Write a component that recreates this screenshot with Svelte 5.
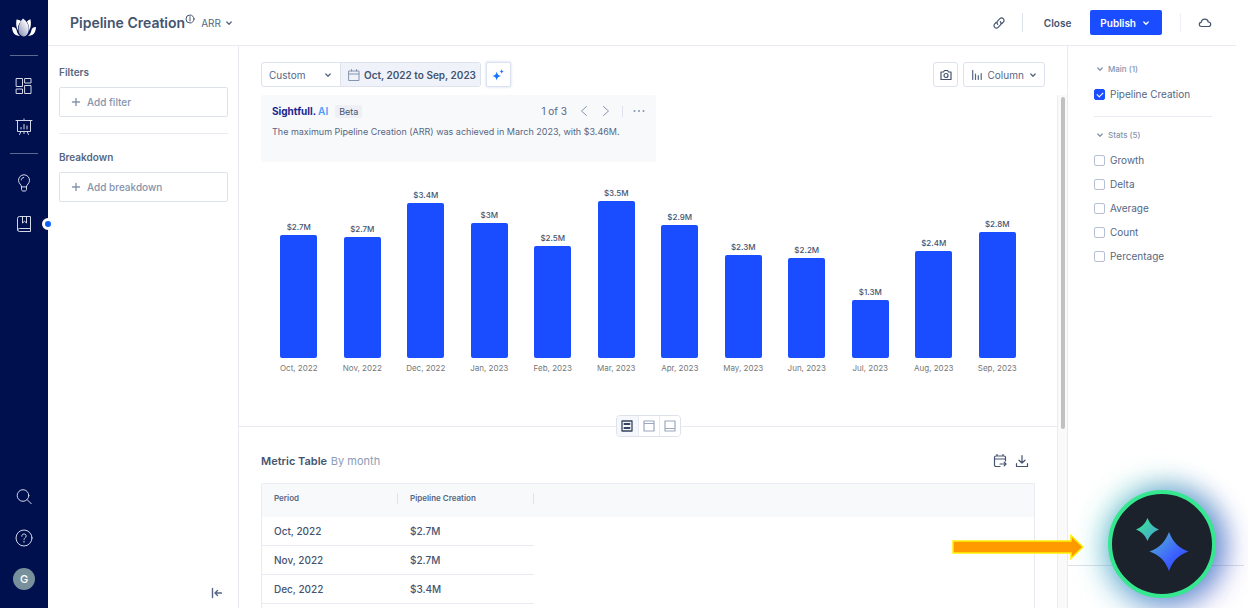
<script lang="ts">
    const months = [
        { label: 'Oct, 2022', value: 2.71 },
        { label: 'Nov, 2022', value: 2.66 },
        { label: 'Dec, 2022', value: 3.42 },
        { label: 'Jan, 2023', value: 2.98 },
        { label: 'Feb, 2023', value: 2.46 },
        { label: 'Mar, 2023', value: 3.46 },
        { label: 'Apr, 2023', value: 2.94 },
        { label: 'May, 2023', value: 2.27 },
        { label: 'Jun, 2023', value: 2.2 },
        { label: 'Jul, 2023', value: 1.28 },
        { label: 'Aug, 2023', value: 2.36 },
        { label: 'Sep, 2023', value: 2.78 },
    ];
    const PX_PER_M = 45.4;
    const VISIBLE_ROWS = 3;

    let metrics = $state([{ name: 'Pipeline Creation', on: true }]);
    let stats = $state([
        { name: 'Growth', on: false },
        { name: 'Delta', on: false },
        { name: 'Average', on: false },
        { name: 'Count', on: false },
        { name: 'Percentage', on: false },
    ]);
    let layout = $state('split');

    const money = (v: number) => `$${Number(v.toFixed(1))}M`;
</script>

{#snippet chevron()}
    <svg class="chevron" viewBox="0 0 8 8" width="8" height="8"><path d="M1.8 3 4 5.200l2.200-2.200" stroke-width="1.3" /></svg>
{/snippet}

{#snippet plus()}
    <svg viewBox="0 0 10 10" width="10" height="10"><path d="M5 1.500v7M1.500 5h7" stroke-width="1.4" /></svg>
{/snippet}

<div class="app">
    <nav class="rail">
        <a class="logo" href="#home" aria-label="Home">
            <svg viewBox="0 0 24 20" width="24" height="20">
                <defs>
                    <linearGradient id="petal" x1="0" y1="1" x2="0.8" y2="0">
                        <stop offset="0" stop-color="#8288ad" />
                        <stop offset="0.9" stop-color="#fff" />
                    </linearGradient>
                </defs>
                <path d="M0 9c3 0 4.300 1.500 4.800 4 .4 2 1.500 3.800 3.200 5C3 17.800.3 15 0 9z" fill="#fff" stroke="none" />
                <path d="M24 9c-3 0-4.300 1.500-4.800 4-.4 2-1.500 3.800-3.200 5 5-.2 7.700-3 8-9z" fill="#fff" stroke="none" />
                <path d="M4.500 1.500c2 .2 3.300.8 4.500 1.800C6.500 6 5.500 9 6 12.500 4.300 9.500 3.800 6 4.500 1.500z" fill="#fff" stroke="none" />
                <path d="M18.500 1.200c.8 4 .5 8-1.300 11.500C17.500 9 16.500 6 14.800 3.700c1-1.200 2-2 3.700-2.500z" fill="#fff" stroke="none" />
                <path d="M11 .5c4 3 6 6.500 5.800 10.500-.1 4-2 7-4.800 7.500C8.500 18.200 6.200 15.200 6.500 11 6.700 7 8 3.500 11 .5z" fill="url(#petal)" stroke="none" />
            </svg>
        </a>
        <hr />
        <a href="#dashboards" aria-label="Dashboards">
            <svg viewBox="0 0 18 18" width="18" height="18"><path d="M1.500 1.500h6v8h-6zM1.500 12h6v4.500h-6zM10 1.500h6V6h-6zM10 8.500h6v8h-6z" /></svg>
        </a>
        <a href="#boards" aria-label="Boards">
            <svg viewBox="0 0 18 18" width="18" height="18"><path d="M1 2.500h16M2.500 2.500v11h13v-11M9 1v1.500M6 13.500 4.500 16.500M12 13.500l1.500 3M9 13.500v2M6 9.500v1.500M9 6.500V11M12 8v3" /></svg>
        </a>
        <hr />
        <a href="#insights" aria-label="Insights">
            <svg viewBox="0 0 18 18" width="18" height="18"><path d="M6.500 12.500C6.500 10.500 3.500 9.800 3.500 6.300a5.500 5.500 0 0 1 11 0c0 3.500-3 4.200-3 6.200zM6.500 12.500v3c0 .8.5 1.500 1.500 1.500h2c1 0 1.500-.7 1.500-1.500v-3M6.200 6c.2-1.500 1-2.300 2.500-2.500" /></svg>
        </a>
        <a class="current" href="#catalog" aria-label="Catalog">
            <svg viewBox="0 0 18 18" width="18" height="18"><path d="M15.500 13.500V1.500H4.500a2 2 0 0 0-2 2v11a2 2 0 0 0 2 2h11v-3h-11a2 2 0 0 0-2 1.500M7.500 1.500V8l2-1.700 2 1.700V1.500" /></svg>
        </a>
        <div class="rail-end">
            <a href="#search" aria-label="Search">
                <svg viewBox="0 0 18 18" width="18" height="18"><circle cx="8" cy="7.500" r="5.800" /><path d="m12.300 11.800 4 4" /></svg>
            </a>
            <a href="#help" aria-label="Help">
                <svg viewBox="0 0 18 18" width="18" height="18"><circle cx="9" cy="9" r="8" /><path d="M6.800 7.200C6.800 5.800 7.700 5 9 5s2.200.8 2.200 2C11.200 8.600 9 8.700 9 10.400M9 12.200v1" /></svg>
            </a>
            <button class="avatar">G</button>
        </div>
    </nav>

    <div class="page">
        <header>
            <h1>Pipeline Creation</h1>
            <svg class="info" viewBox="0 0 10 10" width="10" height="10"><circle cx="5" cy="5" r="4" /><path d="M5 4.500v2.500M5 2.700v.8" /></svg>
            <div class="select unit">
                <select aria-label="Unit"><option>ARR</option></select>
                {@render chevron()}
            </div>
            <div class="actions">
                <button class="plain" aria-label="Copy link">
                    <svg viewBox="0 0 12 12" width="12" height="12"><path d="M4.700 7.300a2.400 2.400 0 0 1 0-3.400l2.200-2.200a2.400 2.400 0 0 1 3.400 3.400L8.900 6.500M7.300 4.700a2.400 2.400 0 0 1 0 3.400l-2.200 2.200a2.400 2.400 0 0 1-3.400-3.400l1.400-1.400" stroke-width="1.2" /></svg>
                </button>
                <span class="rule"></span>
                <button class="plain close">Close</button>
                <button class="publish">Publish {@render chevron()}</button>
                <span class="rule light"></span>
                <button class="plain" aria-label="Saved">
                    <svg viewBox="0 0 14 12" width="14" height="12"><path d="M3.500 9.500a2 2 0 0 1-.3-4.100C3.500 3.500 5 2.200 6.800 2.200c1.700 0 3.100 1.100 3.500 2.800 1.400.1 2.400 1 2.400 2.300 0 1.200-1 2.200-2.200 2.200z" stroke-width="1.2" /></svg>
                </button>
            </div>
        </header>

        <div class="body">
            <aside class="filters">
                <h2>Filters</h2>
                <button class="add">{@render plus()} Add filter</button>
                <hr />
                <h2>Breakdown</h2>
                <button class="add">{@render plus()} Add breakdown</button>
                <button class="plain collapse" aria-label="Collapse panel">
                    <svg viewBox="0 0 12 12" width="12" height="12"><path d="M1.500 1.500v9M10.500 6H4M6.500 3.500 4 6l2.500 2.500" stroke-width="1.4" /></svg>
                </button>
            </aside>

            <main>
                <div class="toolbar">
                    <div class="range">
                        <div class="select">
                            <select aria-label="Date range"><option>Custom</option></select>
                            {@render chevron()}
                        </div>
                        <button class="dates">
                            <svg viewBox="0 0 12 12" width="12" height="12"><path d="M1 2h10v9.500H1zM1 5h10M3.500.5V2M8.500.5V2" /></svg>
                            Oct, 2022 to Sep, 2023
                        </button>
                    </div>
                    <button class="spark" aria-label="AI insights">
                        <svg viewBox="0 0 12 12" width="12" height="12"><path d="M4.700 2.500c.7 3.100 1.400 3.800 4.500 4.500-3.100.7-3.800 1.400-4.500 4.500C4 8.400 3.300 7.700.2 7 3.300 6.300 4 5.600 4.700 2.500zM9.700.3c.4 1.500.7 1.800 2.200 2.200-1.500.4-1.800.7-2.200 2.200-.4-1.500-.7-1.800-2.200-2.200 1.500-.4 1.800-.7 2.200-2.200z" /></svg>
                    </button>
                    <button class="box camera" aria-label="Snapshot">
                        <svg viewBox="0 0 12 12" width="12" height="12"><path d="M1 3h2.500l1-1.500h3l1 1.500H11v7.500H1z" stroke-width="1.200" /><circle cx="6" cy="6.500" r="2" stroke-width="1.200" /></svg>
                    </button>
                    <div class="select box kind">
                        <svg viewBox="0 0 10 10" width="10" height="10"><path d="M.7.5v9M3.500 4v5.500M6.300 5.500v4M9.200 3.500v6" stroke-width="1.200" /></svg>
                        <select aria-label="Chart type"><option>Column</option></select>
                        {@render chevron()}
                    </div>
                </div>

                <div class="scroller">
                    <div class="content">
                        <section class="insight">
                            <div class="insight-head">
                                <h3>Sightfull.<span>AI</span></h3>
                                <span class="beta">Beta</span>
                                <span class="count">1 of 3</span>
                                <button class="plain" aria-label="Previous"><svg viewBox="0 0 10 10" width="10" height="10"><path d="M7.500.5 2.500 5l5 4.500" /></svg></button>
                                <button class="plain" aria-label="Next"><svg viewBox="0 0 10 10" width="10" height="10"><path d="M2.500.5l5 4.500-5 4.500" /></svg></button>
                                <span class="tick"></span>
                                <button class="plain more" aria-label="More"><svg class="dots" viewBox="0 0 12 4" width="12" height="4"><circle cx="1.500" cy="2" r="1" /><circle cx="6" cy="2" r="1" /><circle cx="10.500" cy="2" r="1" /></svg></button>
                            </div>
                            <p>The maximum Pipeline Creation (ARR) was achieved in March 2023, with $3.46M.</p>
                        </section>

                        <div class="chart">
                            {#each months as m}
                                <div class="col">
                                    <span class="value">{money(m.value)}</span>
                                    <div class="bar" style="height: {Math.round(m.value * PX_PER_M)}px"></div>
                                    <span class="month">{m.label}</span>
                                </div>
                            {/each}
                        </div>

                        <div class="divider">
                            <div class="views">
                                <button class:on={layout === 'split'} onclick={() => layout = 'split'} aria-label="Chart and table">
                                    <svg viewBox="0 0 12 12" width="12" height="12"><path d="M1 1h10v10H1z" stroke-width="1.300" /><path d="M3.500 4h5M3.500 8h5" stroke-width="2" /></svg>
                                </button>
                                <button class:on={layout === 'chart'} onclick={() => layout = 'chart'} aria-label="Chart only">
                                    <svg viewBox="0 0 12 12" width="12" height="12"><path d="M1 1h10v10H1zM1 3.500h10" stroke-width="1.2" /></svg>
                                </button>
                                <button class:on={layout === 'table'} onclick={() => layout = 'table'} aria-label="Table only">
                                    <svg viewBox="0 0 12 12" width="12" height="12"><path d="M1 1h10v10H1zM1 8.500h10" stroke-width="1.2" /></svg>
                                </button>
                            </div>
                        </div>

                        <div class="table-head">
                            <h2>Metric Table <span>By month</span></h2>
                            <button class="plain" aria-label="Schedule">
                                <svg viewBox="0 0 14 14" width="14" height="14"><path d="M7 12.500H3a1.500 1.500 0 0 1-1.500-1.500V3.500A1.500 1.500 0 0 1 3 2h8a1.500 1.500 0 0 1 1.500 1.500V7M1.500 5h11M4 .5V2M10 .5V2M7 10h6M11.200 8.200 13 10l-1.800 1.800" stroke-width="1.200" /></svg>
                            </button>
                            <button class="plain" aria-label="Download">
                                <svg viewBox="0 0 14 14" width="14" height="14"><path d="M7 1.500V9M4 6.200 7 9l3-2.800M1.500 9.500v3h11v-3" stroke-width="1.200" /></svg>
                            </button>
                        </div>

                        <div class="table-box">
                            <table>
                                <thead>
                                    <tr><th><span>Period</span></th><th><span>Pipeline Creation</span></th><th></th></tr>
                                </thead>
                                <tbody>
                                    {#each months.slice(0, VISIBLE_ROWS) as m}
                                        <tr><td>{m.label}</td><td>{money(m.value)}</td></tr>
                                    {/each}
                                </tbody>
                            </table>
                        </div>
                    </div>
                    <div class="track"><div class="thumb"></div></div>
                </div>
            </main>

            <aside class="series">
                <div class="series-list">
                    <h4>{@render chevron()} Main (1)</h4>
                    {#each metrics as item}
                        <label><input type="checkbox" bind:checked={item.on} />{item.name}</label>
                    {/each}
                    <hr />
                    <h4>{@render chevron()} Stats (5)</h4>
                    {#each stats as item}
                        <label><input type="checkbox" bind:checked={item.on} />{item.name}</label>
                    {/each}
                </div>
                <div class="series-foot"></div>
            </aside>
        </div>
    </div>

    <svg class="arrow" viewBox="0 0 132 26" width="132" height="26">
        <path d="M1 7h118V1.500L131 13l-12 11.500V19H1z" />
    </svg>
    <button class="assistant" aria-label="Open assistant">
        <svg viewBox="0 0 100 100" width="100" height="100">
            <defs>
                <linearGradient id="star-small" x1="0" y1="0" x2="1" y2="1">
                    <stop offset="0.2" stop-color="#3adf9c" />
                    <stop offset="1" stop-color="#4a9ad8" />
                </linearGradient>
                <linearGradient id="star-big" x1="0" y1="0" x2="1" y2="1">
                    <stop offset="0.15" stop-color="#4fa3d8" />
                    <stop offset="0.6" stop-color="#3d62ff" />
                    <stop offset="1" stop-color="#2440ff" />
                </linearGradient>
            </defs>
            <path d="M35.500 24c2.500 6 5.500 9 11.500 11.500-6 2.500-9 5.500-11.500 11.500-2.500-6-5.500-9-11.500-11.500C30 33 33 30 35.500 24z" fill="url(#star-small)" stroke="none" />
            <path d="M57 38c4 10 9 15.500 19.500 19.500C66 61.500 61 66.500 57 77c-4-10.500-9-15.500-19.500-19.500C48 53.500 53 48 57 38z" fill="url(#star-big)" stroke="none" />
        </svg>
    </button>
</div>

<style>
    :global(body) { margin: 0; background: #fff; }
    .app {
        --text: #44546f;
        --soft: #566783;
        --muted: #8594ad;
        --line: #e8ebf2;
        --blue: #1a4dff;
        position: relative;
        display: flex;
        height: 100vh;
        overflow: hidden;
        font-family: Inter, sans-serif;
        font-size: 10px;
        color: var(--text);
    }
    .app * { box-sizing: border-box; }
    h1, h2, h3, h4, p { margin: 0; }
    hr { border: 0; margin: 0; }
    svg { display: block; flex: none; fill: none; stroke: currentColor; stroke-linecap: round; stroke-linejoin: round; }
    button, select { font: inherit; color: inherit; cursor: pointer; }
    button { padding: 0; }
    .plain { display: flex; background: none; border: 0; }

    .rail {
        display: flex;
        flex-direction: column;
        align-items: center;
        flex: none;
        width: 48px;
        padding: 18px 0 18px;
        background: #000f4d;
        color: #d3d7e8;
    }
    .rail a { display: flex; position: relative; color: inherit; }
    .rail hr { width: 28px; height: 1px; background: #5d6891; }
    .rail a + a { margin-top: 23px; }
    .rail a + hr { margin: 17px 0 20px; }
    .rail .logo + hr { margin: 17px 0 21px; }
    .current::after {
        content: '';
        position: absolute;
        right: -21px;
        top: 3px;
        width: 6px;
        height: 6px;
        border: 3px solid #fff;
        border-radius: 50%;
        background: #0b5fff;
        box-sizing: content-box;
    }
    .rail-end { display: flex; flex-direction: column; align-items: center; margin-top: auto; }
    .avatar {
        width: 22px;
        height: 22px;
        margin-top: 21px;
        border: 0;
        border-radius: 50%;
        background: #78909c;
        color: #fff;
        font-size: 11px;
        font-weight: 500;
    }

    .page { display: flex; flex-direction: column; flex: 1; min-width: 0; }
    header {
        display: flex;
        align-items: center;
        height: 46px;
        flex: none;
        margin-right: 12px;
        padding: 0 24px 0 22px;
        border-bottom: 1px solid var(--line);
    }
    h1 { font-size: 14px; font-weight: 600; }
    .info { margin: 0 6px 8px 0; }
    .select { display: flex; align-items: center; }
    .select select {
        flex: 1;
        appearance: none;
        margin-right: -10px;
        padding: 0 14px 0 0;
        border: 0;
        outline: 0;
        background: none;
    }
    .select .chevron { pointer-events: none; }
    .unit { color: var(--soft); }
    .actions { display: flex; align-items: center; margin-left: auto; }
    .rule { width: 1px; height: 19px; margin: 0 21px 0 17px; background: #dde2ec; }
    .rule.light { margin: 0 17px 0 18px; background: #eef0f5; }
    .close { margin-right: 19px; font-weight: 600; }
    .publish {
        display: flex;
        align-items: center;
        gap: 6px;
        height: 25px;
        padding: 0 12px 0 10px;
        border: 0;
        border-radius: 2px;
        background: var(--blue);
        color: #fff;
        font-weight: 600;
    }

    .body { display: flex; flex: 1; min-height: 0; }
    .filters {
        display: flex;
        flex-direction: column;
        flex: none;
        width: 191px;
        padding: 20px 10px 9px 11px;
        border-right: 1px solid var(--line);
    }
    .filters h2 { font-size: 10px; line-height: 13px; font-weight: 600; color: var(--soft); }
    .add {
        display: flex;
        align-items: center;
        gap: 6px;
        height: 30px;
        margin-top: 8px;
        padding: 0 11px;
        border: 1px solid #dde2ec;
        border-radius: 2px;
        background: #fff;
        color: var(--muted);
        font-weight: 500;
    }
    .filters hr { height: 1px; margin: 16px 0 17px; background: var(--line); }
    .collapse { margin: auto 5px 0 auto; color: var(--soft); }

    main { display: flex; flex-direction: column; flex: 1; min-width: 0; }
    .toolbar { display: flex; align-items: center; padding: 16px 22px 8px; }
    .range { display: flex; height: 25px; border: 1px solid #dde2ec; border-radius: 3px; }
    .range .select { width: 78px; padding: 0 8px 0 7px; color: var(--soft); }
    .dates {
        display: flex;
        align-items: center;
        gap: 4px;
        padding: 0 4px 0 7px;
        border: 0;
        border-left: 1px solid #dde2ec;
        background: #eff2f9;
        font-weight: 600;
    }
    .dates svg { color: var(--muted); }
    .spark {
        display: flex;
        align-items: center;
        justify-content: center;
        width: 25px;
        height: 25px;
        margin-left: 5px;
        border: 1px solid #dbe2f2;
        border-radius: 2px;
        background: #fff;
        box-shadow: 0 0 2px 1px #e8edf8;
    }
    .spark svg { fill: #1573ff; stroke: none; }
    .box { display: flex; align-items: center; justify-content: center; height: 25px; border: 1px solid #dde2ec; border-radius: 3px; background: #fff; }
    .camera { width: 25px; margin: 0 5px 0 auto; }
    .kind { width: 82px; padding: 0 8px; color: var(--soft); }
    .kind select { margin-left: 6px; }

    .scroller { display: flex; flex: 1; min-height: 0; }
    .content { display: flex; flex-direction: column; flex: 1; min-width: 0; overflow: hidden; }
    .insight { width: 395px; height: 67px; margin-left: 22px; padding: 9px 11px; background: #f8f9fb; border-radius: 2px; }
    .insight-head { display: flex; align-items: center; height: 14px; }
    h3 { font-size: 10px; font-weight: 700; color: #1a2590; }
    h3 span { margin-left: 2px; font-weight: 600; color: #4c9dfb; }
    .beta { margin-left: 7px; padding: 0 4px; border-radius: 2px; background: #eef0f6; font-size: 9px; line-height: 13px; }
    .count { margin-left: auto; color: var(--soft); }
    .insight .plain { margin-left: 12px; color: var(--muted); }
    .tick { width: 1px; height: 11px; margin-left: 11px; background: #dde2ec; }
    .insight .more { margin-left: 10px; }
    .dots { fill: currentColor; stroke: none; }
    .insight p { margin-top: 8px; font-size: 9px; line-height: 12px; color: var(--soft); }

    .chart { display: flex; align-items: flex-end; flex: none; height: 216px; padding: 0 28px; }
    .col { display: flex; flex-direction: column; align-items: center; flex: 1; }
    .value { font-size: 8px; line-height: 10px; margin-bottom: 3px; font-weight: 500; }
    .bar { width: 37px; border-radius: 2px; background: var(--blue); }
    .month { margin-top: 5px; padding-bottom: 5px; font-size: 8px; line-height: 10px; color: #777; }

    .divider { display: flex; align-items: center; flex: none; margin-top: 37px; }
    .divider::before, .divider::after { content: ''; flex: 1; height: 1px; background: var(--line); }
    .views { display: flex; border: 1px solid #dde2ec; border-radius: 4px; overflow: hidden; }
    .views button {
        display: flex;
        align-items: center;
        justify-content: center;
        width: 21px;
        height: 20px;
        border: 0;
        background: #fff;
        color: #9aa8bf;
    }
    .views button + button { border-left: 1px solid var(--line); }
    .views button.on { background: #f5f7fa; color: #33435f; }

    .table-head { display: flex; align-items: center; flex: none; height: 16px; margin: 16px 28px 14px 22px; }
    .table-head h2 { flex: 1; font-size: 11px; font-weight: 600; }
    .table-head h2 span { margin-left: 1px; font-weight: 400; color: #8c9cb5; }
    .table-head button { margin-left: 8px; }

    .table-box { flex: 1; margin: 0 22px; border: 1px solid var(--line); border-bottom: 0; border-radius: 2px 2px 0 0; }
    table { width: 100%; border-collapse: separate; border-spacing: 0; table-layout: fixed; }
    th, td { padding: 0 0 0 12px; text-align: left; }
    th { height: 33px; background: #f8f9fb; font-size: 8px; font-weight: 600; color: var(--soft); }
    th:nth-child(-n + 2) { width: 136px; }
    th span { display: block; margin-bottom: 4px; line-height: 11px; border-right: 1px solid #dde2ec; }
    td { height: 29px; border-bottom: 1px solid var(--line); font-weight: 500; }

    .track { flex: none; width: 10px; padding: 2px 2px 0 3px; background: #fafafa; border-left: 1px solid #ececec; }
    .thumb { height: 65%; border-radius: 3px; background: #c1c1c1; }

    .series { display: flex; flex-direction: column; flex: none; width: 181px; border-left: 1px solid var(--line); }
    .series-list { flex: 1; padding: 16px 36px 0 26px; }
    .series-foot { height: 43px; margin-right: 4px; border-top: 1px solid #dde0ea; }
    h4 { display: flex; align-items: center; gap: 4px; height: 14px; margin: 0 0 11px 2px; font-size: 8px; font-weight: 500; color: var(--muted); }
    label { display: flex; align-items: center; gap: 5px; height: 14px; color: var(--soft); }
    label + label { margin-top: 10px; }
    .series hr { height: 1px; margin: 15px 0 11px; background: var(--line); }
    input { appearance: none; display: flex; justify-content: center; width: 11px; height: 11px; margin: 0; border: 1px solid #b5c0d3; border-radius: 2px; background: #fff; }
    input:checked { border-color: var(--blue); background: var(--blue); }
    input:checked::after { content: ''; width: 3px; height: 5px; margin-top: 1px; border: solid #fff; border-width: 0 1px 1px 0; transform: rotate(45deg); box-sizing: content-box; }

    .arrow { position: absolute; right: 164px; bottom: 48px; fill: #ff9a00; stroke: #fff200; stroke-width: 1.5; stroke-linejoin: miter; }
    .assistant {
        position: absolute;
        right: 32px;
        bottom: 10px;
        display: flex;
        align-items: center;
        justify-content: center;
        width: 108px;
        height: 108px;
        border: 4px solid #35e88f;
        border-radius: 50%;
        background: #1c222c;
        box-shadow:
            -5px -8px 30px rgba(70, 220, 180, 0.3),
            9px -3px 26px rgba(30, 80, 190, 0.45),
            8px 10px 30px rgba(60, 50, 190, 0.35),
            -8px 10px 28px rgba(80, 200, 220, 0.35);
    }
</style>
